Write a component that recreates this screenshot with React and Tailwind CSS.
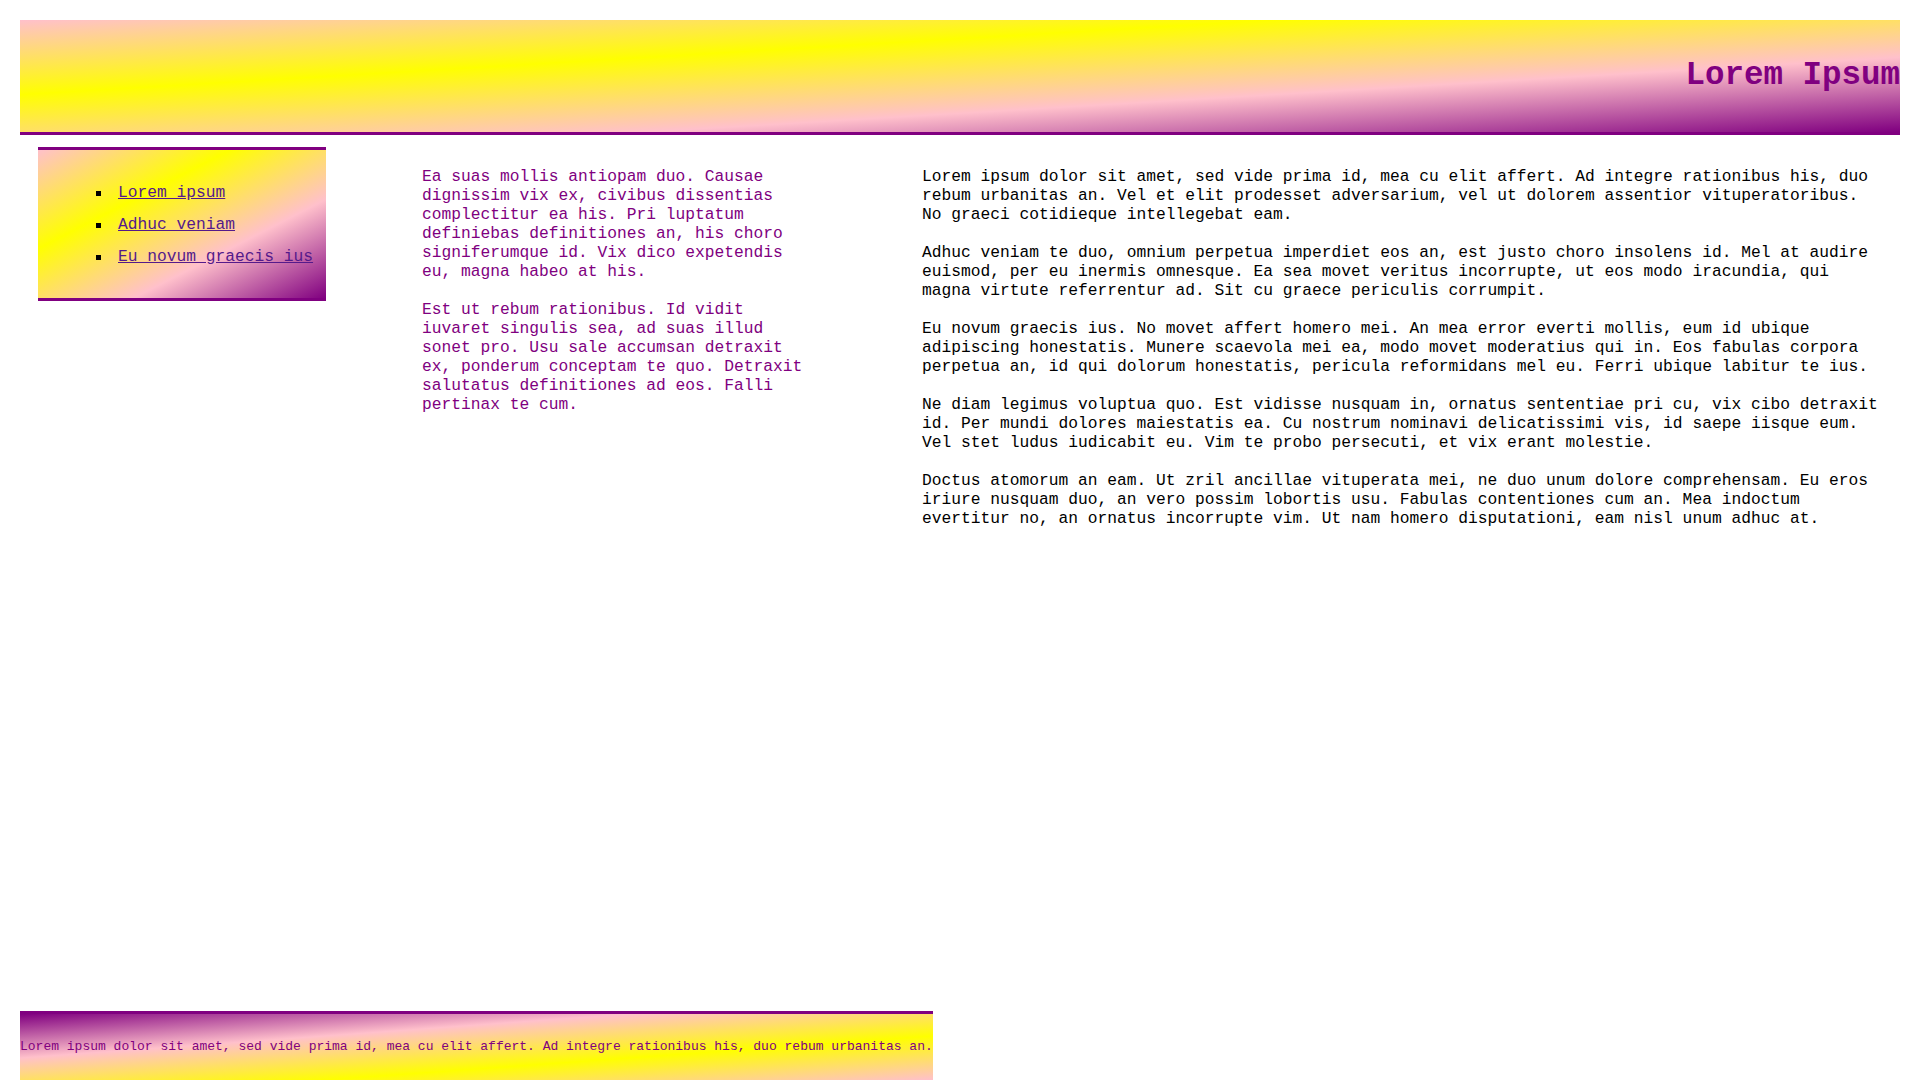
import React from "react";

const links = ["Lorem ipsum", "Adhuc veniam", "Eu novum graecis ius"];

const middle = [
  "Ea suas mollis antiopam duo. Causae dignissim vix ex, civibus dissentias complectitur ea his. Pri luptatum definiebas definitiones an, his choro signiferumque id. Vix dico expetendis eu, magna habeo at his.",
  "Est ut rebum rationibus. Id vidit iuvaret singulis sea, ad suas illud sonet pro. Usu sale accumsan detraxit ex, ponderum conceptam te quo. Detraxit salutatus definitiones ad eos. Falli pertinax te cum.",
];

const right = [
  "Lorem ipsum dolor sit amet, sed vide prima id, mea cu elit affert. Ad integre rationibus his, duo rebum urbanitas an. Vel et elit prodesset adversarium, vel ut dolorem assentior vituperatoribus. No graeci cotidieque intellegebat eam.",
  "Adhuc veniam te duo, omnium perpetua imperdiet eos an, est justo choro insolens id. Mel at audire euismod, per eu inermis omnesque. Ea sea movet veritus incorrupte, ut eos modo iracundia, qui magna virtute referrentur ad. Sit cu graece periculis corrumpit.",
  "Eu novum graecis ius. No movet affert homero mei. An mea error everti mollis, eum id ubique adipiscing honestatis. Munere scaevola mei ea, modo movet moderatius qui in. Eos fabulas corpora perpetua an, id qui dolorum honestatis, pericula reformidans mel eu. Ferri ubique labitur te ius.",
  "Ne diam legimus voluptua quo. Est vidisse nusquam in, ornatus sententiae pri cu, vix cibo detraxit id. Per mundi dolores maiestatis ea. Cu nostrum nominavi delicatissimi vis, id saepe iisque eum. Vel stet ludus iudicabit eu. Vim te probo persecuti, et vix erant molestie.",
  "Doctus atomorum an eam. Ut zril ancillae vituperata mei, ne duo unum dolore comprehensam. Eu eros iriure nusquam duo, an vero possim lobortis usu. Fabulas contentiones cum an. Mea indoctum evertitur no, an ornatus incorrupte vim. Ut nam homero disputationi, eam nisl unum adhuc at.",
];

export default function App() {
  return (
    <div className="min-h-screen flex flex-col pt-5 px-5 bg-white font-['Liberation_Mono','DejaVu_Sans_Mono',monospace] text-[16.25px]">
      {/* Header */}
      <header className="h-[115px] flex items-center justify-end border-b-[3px] border-[#800080] bg-[linear-gradient(to_bottom_right,pink,yellow,pink,purple)]">
        <h1 className="text-[32.5px] leading-none font-bold text-[#800080]">Lorem Ipsum</h1>
      </header>

      <main className="flex items-start">
        {/* Sidebar */}
        <aside className="ml-[18px] mt-3 w-[288px] border-y-[3px] border-[#800080] bg-[linear-gradient(to_bottom_right,pink,yellow,pink,purple)]">
          <ul className="pt-[27px] pb-[25px]">
            {links.map((l) => (
              <li key={l} className="flex items-center leading-[32px]">
                <span className="ml-[58px] mr-[17px] w-[5px] h-[5px] bg-black shrink-0" />
                <a href="#" className="underline text-[#551a8b]">
                  {l}
                </a>
              </li>
            ))}
          </ul>
        </aside>

        {/* Middle column */}
        <section className="ml-[96px] mt-[32px] w-[390px] text-[#800080] leading-[19px]">
          {middle.map((p, i) => (
            <p key={i} className="mb-[19px]">
              {p}
            </p>
          ))}
        </section>

        {/* Right column */}
        <section className="ml-[110px] mt-[32px] w-[960px] text-black leading-[19px]">
          {right.map((p, i) => (
            <p key={i} className="mb-[19px]">
              {p}
            </p>
          ))}
        </section>
      </main>

      {/* Footer */}
      <footer className="mt-auto self-start border-t-[3px] border-[#800080] py-[25px] bg-[linear-gradient(to_top_left,pink,yellow,pink,purple)]">
        <p className="text-[13px] leading-[16px] text-[#800080]">
          Lorem ipsum dolor sit amet, sed vide prima id, mea cu elit affert. Ad integre rationibus his, duo rebum urbanitas an.
        </p>
      </footer>
    </div>
  );
}
